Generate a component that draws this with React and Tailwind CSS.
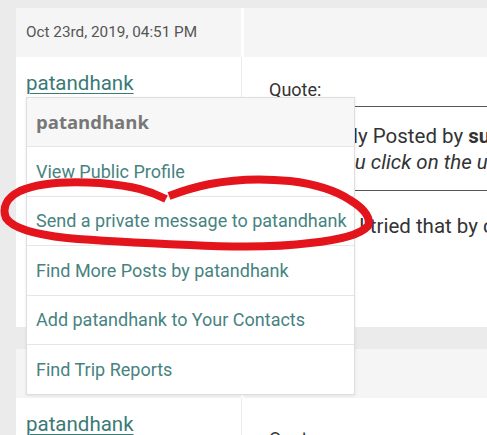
import React from 'react';

const menuItems = [
  'View Public Profile',
  'Send a private message to patandhank',
  'Find More Posts by patandhank',
  'Add patandhank to Your Contacts',
  'Find Trip Reports',
];

function Post({ date, children, bodyH }) {
  return (
    <div className="bg-white">
      <div className="flex h-[49px]">
        <div className="w-[225px] shrink-0 bg-[#f5f5f5] flex items-center pl-[10px] text-[15.3px] text-[#555]">{date}</div>
        <div className="flex-1 ml-[3px] bg-[#f5f5f5]"></div>
      </div>
      <div className="flex" style={{ height: bodyH }}>
        <div className="w-[226px] shrink-0 border-r border-[#ececec] pl-[10px] pt-[14px]">
          <a className="text-[20.5px] leading-[24px] text-[#3a7a77] underline underline-offset-[3px] decoration-1">patandhank</a>
        </div>
        <div className="flex-1 min-w-0 pl-[27px] pt-[23px]">{children}</div>
      </div>
    </div>
  );
}

export default function App() {
  return (
    <div className="relative w-[487px] h-[435px] overflow-hidden bg-[#ebebeb] pl-4 pt-2 font-['Roboto',sans-serif]">
      <div className="w-[520px]">
        <Post date="Oct 23rd, 2019, 04:51 PM" bodyH={270}>
          <div className="text-[18px] leading-[20px] text-[#333]">Quote:</div>
          <div className="mt-[6px] border-y border-[#555] pt-[16px] pb-[15px] text-[20.5px] leading-[26px] text-[#333] whitespace-nowrap">
            <div className="pl-[14px]">Originally Posted by <b>sunshine</b></div>
            <div className="pl-[10px] italic">When you click on the user name</div>
          </div>
          <div className="mt-[22px] pl-[14px] text-[20.5px] leading-[26px] text-[#333] whitespace-nowrap">Thanks, I tried that by clicking</div>
        </Post>
        <div className="h-[22px]"></div>
        <Post date="Oct 23rd, 2019, 05:02 PM" bodyH={80}>
          <div className="text-[18px] leading-[20px] text-[#333] pt-[8px]">Quote:</div>
        </Post>
      </div>

      <div className="absolute left-[26px] top-[97px] w-[329px] bg-white border border-[#dedede] shadow-[0_1px_3px_rgba(0,0,0,0.08)]">
        <div className="h-[48px] bg-[#f7f7f7] flex items-center pl-[9px] text-[18.5px] font-bold text-[#777] font-['Open_Sans',sans-serif]">patandhank</div>
        {menuItems.map(t => (
          <div key={t} className="h-[49.5px] border-t border-[#e6e6e6] flex items-center pl-[9px] text-[18px] text-[#468380] whitespace-nowrap">{t}</div>
        ))}
      </div>

      <svg className="absolute left-0 top-0 pointer-events-none" width="487" height="435" viewBox="0 0 487 435">
        <path
          d="M166 199 C150 191 135 186 100 183 C70 181 40 182 20 191 C6 198 2 208 6 218 C12 227 30 234 67 238 C100 241 140 243 190 245 C230 247 280 247 310 243 C340 240 360 235 368 226 C372 216 360 206 350 200 C335 190 315 184 290 181 C260 178 230 180 210 184 C195 187 182 191 169 196"
          fill="none"
          stroke="#e3141c"
          strokeWidth="8"
          strokeLinecap="butt"
        />
      </svg>
    </div>
  );
}
